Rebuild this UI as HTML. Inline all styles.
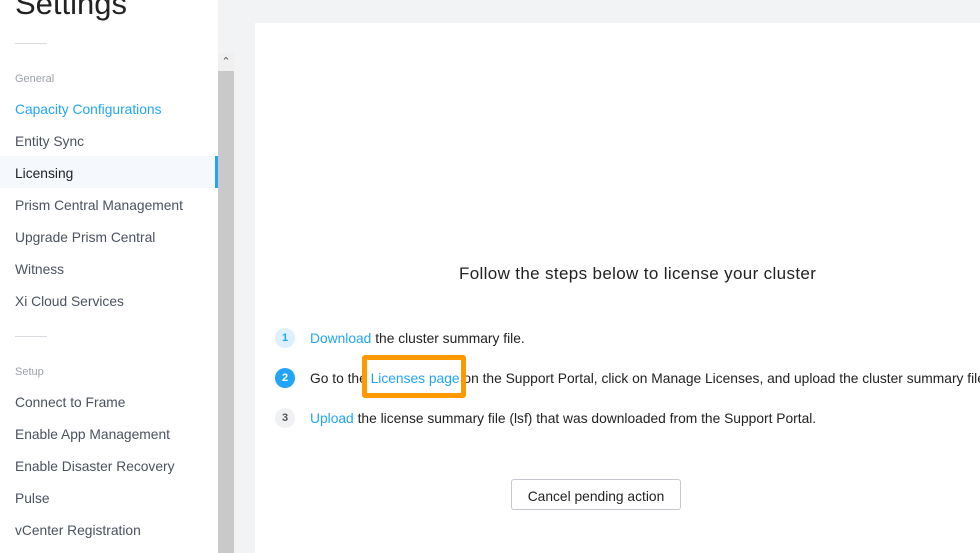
<!DOCTYPE html>
<html><head><style>
body{margin:0;width:980px;height:553px;overflow:hidden;font-family:"Liberation Sans",sans-serif;background:#f2f3f5;position:relative}
.side{position:absolute;left:0;top:0;width:218px;height:553px;background:#fff}
.sb{position:absolute;left:218px;top:53px;width:16px;height:500px;background:#c9c9c9}
.sbt{position:absolute;left:218px;top:53px;width:16px;height:18px;background:#f0f0f0;font-size:11px;text-align:center;color:#555;line-height:18px}
h1{position:absolute;left:15px;top:-14px;margin:0;font-weight:normal;font-size:31px;color:#222}
.hr{position:absolute;left:15px;width:32px;height:1px;background:#d8dbe0}
.sec{position:absolute;left:15px;font-size:11px;color:#9aa0a8}
.it{position:absolute;left:15px;font-size:13.8px;color:#4a5260}
.act{position:absolute;left:0;top:156px;width:218px;height:32px;background:#f5f9fd;border-right:3px solid #22a5f7;box-sizing:border-box}
.main{position:absolute;left:255px;top:23px;width:725px;height:530px;background:#fff}
.t{position:absolute;font-size:13.8px;color:#222;white-space:nowrap}
.a{color:#22a5f7}
.n{position:absolute;left:275px;width:20px;height:20px;border-radius:50%;font-size:11px;font-weight:bold;text-align:center;line-height:20px}
</style></head><body>
<div class="side">
<h1>Settings</h1>
<div class="hr" style="top:43px"></div>
<div class="sec" style="top:73px">General</div>
<div class="it" style="top:102px;color:#22a5f7">Capacity Configurations</div>
<div class="it" style="top:134px">Entity Sync</div>
<div class="act"></div>
<div class="it" style="top:166px;color:#222">Licensing</div>
<div class="it" style="top:198px">Prism Central Management</div>
<div class="it" style="top:230px">Upgrade Prism Central</div>
<div class="it" style="top:262px">Witness</div>
<div class="it" style="top:294px">Xi Cloud Services</div>
<div class="hr" style="top:336px"></div>
<div class="sec" style="top:366px">Setup</div>
<div class="it" style="top:395px">Connect to Frame</div>
<div class="it" style="top:427px">Enable App Management</div>
<div class="it" style="top:459px">Enable Disaster Recovery</div>
<div class="it" style="top:491px">Pulse</div>
<div class="it" style="top:523px">vCenter Registration</div>
</div>
<div class="sb"></div><div class="sbt">&#8963;</div>
<div class="main"></div>
<div class="t" style="left:459px;top:264px;font-size:17px;letter-spacing:0.35px">Follow the steps below to license your cluster</div>
<div class="n" style="top:328px;background:#dcf0fd;color:#22a5f7">1</div>
<div class="n" style="top:368px;background:#22a5f7;color:#fff">2</div>
<div class="n" style="top:408px;background:#f0f1f3;color:#555">3</div>
<div class="t" style="left:310px;top:331px"><span class="a">Download</span> the cluster summary file.</div>
<div class="t" style="left:310px;top:371px">Go to the <span class="a">Licenses page</span> on the Support Portal, click on Manage Licenses, and upload the cluster summary file.</div>
<div class="t" style="left:310px;top:411px"><span class="a">Upload</span> the license summary file (lsf) that was downloaded from the Support Portal.</div>
<div style="position:absolute;left:362px;top:355px;width:104px;height:43px;border:5px solid #ff9900;border-radius:3px;box-sizing:border-box"></div>
<div style="position:absolute;left:511px;top:479px;width:170px;height:31px;border:1px solid #c5c9cf;border-radius:3px;box-sizing:border-box;background:#fff;font-size:13.8px;color:#222;text-align:center;line-height:33px">Cancel pending action</div>
</body></html>
